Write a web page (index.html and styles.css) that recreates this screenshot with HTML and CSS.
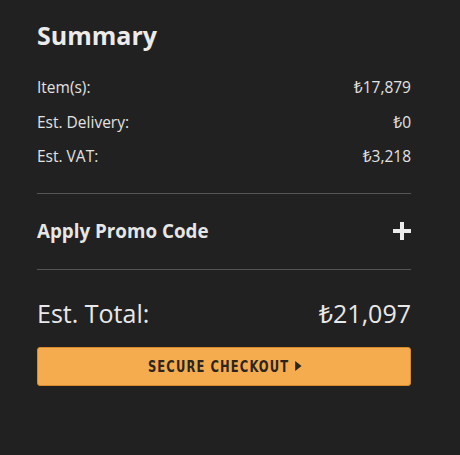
FILE: index.html
```html
<!DOCTYPE html>
<html>
<head>
<meta charset="utf-8">
<link rel="stylesheet" href="styles.css">
</head>
<body>
<div class="summary">
  <h2 class="title">Summary</h2>
  <div class="rows">
    <div class="row"><span>Item(s):</span><span>₺17,879</span></div>
    <div class="row"><span>Est. Delivery:</span><span>₺0</span></div>
    <div class="row"><span>Est. VAT:</span><span>₺3,218</span></div>
  </div>
  <div class="promo">
    <span class="promo-label">Apply Promo Code</span>
    <span class="plus"></span>
  </div>
  <div class="total">
    <span>Est. Total:</span><span>₺21,097</span>
  </div>
  <button class="checkout"><span class="checkout-inner">SECURE CHECKOUT<span class="tri"></span></span></button>
</div>
</body>
</html>
```
FILE: styles.css
```css
html, body {
  margin: 0;
  padding: 0;
  background: #212121;
}
body {
  font-family: "Open Sans", "Noto Sans", sans-serif;
  color: #e4e4e4;
  width: 460px;
  height: 455px;
}
.summary {
  padding: 17px 49px 0 37px;
}
.title {
  margin: 0;
  font-size: 25px;
  font-weight: 700;
  line-height: 36px;
  color: #ebebeb;
}
.rows {
  margin-top: 24px;
  padding-bottom: 12px;
  border-bottom: 1px solid #555;
}
.row {
  display: flex;
  justify-content: space-between;
  font-size: 15.5px;
  line-height: 20px;
  height: 34.5px;
  align-items: flex-start;
  color: #e2e2e2;
}
.promo {
  display: flex;
  justify-content: space-between;
  align-items: center;
  height: 75px;
  border-bottom: 1px solid #555;
}
.promo-label {
  font-size: 18.8px;
  font-weight: 700;
  color: #e6e6e6;
}
.plus {
  position: relative;
  width: 18px;
  height: 18px;
}
.plus::before, .plus::after {
  content: "";
  position: absolute;
  background: #ececec;
}
.plus::before {
  left: 0; right: 0; top: 7px; height: 4px;
}
.plus::after {
  top: 0; bottom: 0; left: 7px; width: 4px;
}
.total {
  display: flex;
  justify-content: space-between;
  font-size: 25px;
  line-height: 34px;
  margin-top: 26px;
  color: #e8e8e8;
}
.checkout {
  display: flex;
  align-items: center;
  justify-content: center;
  width: 374px;
  height: 39px;
  margin-top: 17px;
  background: #f5ac4f;
  border: 1px solid #d98b2c;
  border-radius: 3px;
  padding: 0;
  color: #2b2520;
}
.checkout-inner {
  display: inline-flex;
  align-items: center;
  gap: 7px;
  font-family: "DejaVu Sans Condensed", "DejaVu Sans", sans-serif;
  font-weight: 700;
  font-size: 16px;
  letter-spacing: 1.4px;
  transform: scaleX(0.8);
  transform-origin: center;
  padding-left: 2px;
}
.tri {
  width: 0;
  height: 0;
  border-left: 8px solid #2b2520;
  border-top: 5px solid transparent;
  border-bottom: 5px solid transparent;
}
```
